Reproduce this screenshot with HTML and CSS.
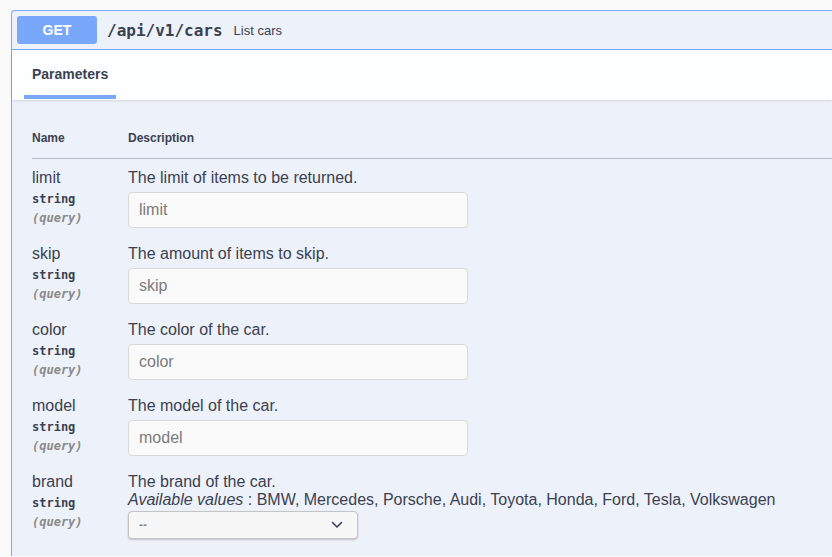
FILE: index.html
```html
<!DOCTYPE html>
<html>
<head>
<meta charset="utf-8">
<link rel="stylesheet" href="styles.css">
</head>
<body>
<div class="page">
  <div class="opblock">
    <div class="summary">
      <span class="method">GET</span>
      <span class="path">/api/v1/cars</span>
      <span class="desc">List cars</span>
    </div>
    <div class="tabs">
      <div class="tab">Parameters</div>
    </div>
    <div class="params">
      <div class="thead">
        <div class="col-name">Name</div>
        <div class="col-desc">Description</div>
      </div>

      <div class="row">
        <div class="col-name">
          <div class="pname">limit</div>
          <div class="ptype">string</div>
          <div class="pin">(query)</div>
        </div>
        <div class="col-desc">
          <div class="ptext">The limit of items to be returned.</div>
          <input class="pinput" type="text" placeholder="limit">
        </div>
      </div>

      <div class="row">
        <div class="col-name">
          <div class="pname">skip</div>
          <div class="ptype">string</div>
          <div class="pin">(query)</div>
        </div>
        <div class="col-desc">
          <div class="ptext">The amount of items to skip.</div>
          <input class="pinput" type="text" placeholder="skip">
        </div>
      </div>

      <div class="row">
        <div class="col-name">
          <div class="pname">color</div>
          <div class="ptype">string</div>
          <div class="pin">(query)</div>
        </div>
        <div class="col-desc">
          <div class="ptext">The color of the car.</div>
          <input class="pinput" type="text" placeholder="color">
        </div>
      </div>

      <div class="row">
        <div class="col-name">
          <div class="pname">model</div>
          <div class="ptype">string</div>
          <div class="pin">(query)</div>
        </div>
        <div class="col-desc">
          <div class="ptext">The model of the car.</div>
          <input class="pinput" type="text" placeholder="model">
        </div>
      </div>

      <div class="row row-last">
        <div class="col-name">
          <div class="pname">brand</div>
          <div class="ptype">string</div>
          <div class="pin">(query)</div>
        </div>
        <div class="col-desc">
          <div class="ptext">The brand of the car.</div>
          <div class="ptext"><i>Available values</i> : BMW, Mercedes, Porsche, Audi, Toyota, Honda, Ford, Tesla, Volkswagen</div>
          <div class="select">
            <span class="select-val">--</span>
            <svg class="chev" width="12" height="8" viewBox="0 0 12 8"><path d="M1.5 1.5 L6 6 L10.5 1.5" fill="none" stroke="#3b4151" stroke-width="1.6" stroke-linecap="round" stroke-linejoin="round"/></svg>
          </div>
        </div>
      </div>
    </div>
  </div>
</div>
</body>
</html>
```

FILE: styles.css
```css
html, body {
  margin: 0;
  padding: 0;
  background: #fafafa;
  overflow: hidden;
}
body {
  font-family: "Liberation Sans", Arial, sans-serif;
  color: #3b4151;
}
.page {
  padding: 10px 0 0 11px;
}
.opblock {
  border: 1px solid #7aa8f6;
  border-right: none;
  border-bottom: none;
  border-radius: 4px 0 0 0;
  background: #edf1f9;
}
.summary {
  display: flex;
  align-items: center;
  padding: 5px;
  border-bottom: 1px solid #7aa8f6;
  height: 28px;
}
.method {
  width: 80px;
  height: 28px;
  background: #79a7f9;
  color: #fff;
  border-radius: 3px;
  font-weight: 700;
  font-size: 14px;
  display: flex;
  align-items: center;
  justify-content: center;
}
.path {
  margin-left: 10px;
  font-family: "DejaVu Sans Mono", monospace;
  font-weight: 700;
  font-size: 16px;
  color: #3b4151;
}
.desc {
  margin-left: 11px;
  font-size: 13px;
  color: #3b4151;
}
.tabs {
  background: #fdfeff;
  height: 50px;
  padding-left: 12px;
  display: flex;
  box-shadow: 0 1px 2px rgba(0,0,0,0.12);
  position: relative;
}
.tab {
  box-sizing: border-box;
  height: 49px;
  padding: 3px 8px 0;
  font-size: 14px;
  font-weight: 700;
  display: flex;
  align-items: center;
  border-bottom: 4px solid #79a7f9;
}
.params {
  padding: 20px 0 17px 20px;
}
.thead {
  display: flex;
  border-bottom: 1px solid #b3bbca;
  padding: 11px 0 12px;
  font-size: 12px;
  font-weight: 700;
  line-height: 15px;
}
.col-name {
  width: 96px;
  flex: none;
}
.col-desc {
  flex: 1;
}
.row {
  display: flex;
  padding-top: 10px;
  height: 66px;
}
.pname {
  font-size: 16px;
  line-height: 18px;
}
.ptype {
  font-family: "DejaVu Sans Mono", monospace;
  font-weight: 700;
  font-size: 12px;
  line-height: 15px;
  margin-top: 5px;
}
.pin {
  font-family: "DejaVu Sans Mono", monospace;
  font-style: italic;
  font-weight: 700;
  font-size: 12px;
  line-height: 15px;
  color: #8a8a8a;
  margin-top: 4px;
}
.ptext {
  font-size: 16px;
  line-height: 18px;
}
.pinput {
  display: block;
  box-sizing: border-box;
  width: 340px;
  height: 36px;
  margin-top: 5px;
  padding: 0 10px;
  border: 1px solid #d9d9d9;
  border-radius: 4px;
  background: #fafafa;
  font-family: "Liberation Sans", Arial, sans-serif;
  font-size: 16px;
  color: #3b4151;
  outline: none;
}
.pinput::placeholder {
  color: #7a7a7a;
}
.select {
  box-sizing: border-box;
  width: 230px;
  height: 28px;
  margin-top: 2px;
  border: 1px solid #c4c4c4;
  border-radius: 4px;
  background: #f7f7f7;
  box-shadow: 0 1px 2px rgba(0,0,0,0.2);
  display: flex;
  align-items: center;
  justify-content: space-between;
  padding: 0 14px 0 10px;
}
.select-val {
  font-size: 12px;
  color: #888;
  font-weight: 700;
}
.chev {
  display: block;
}
```
